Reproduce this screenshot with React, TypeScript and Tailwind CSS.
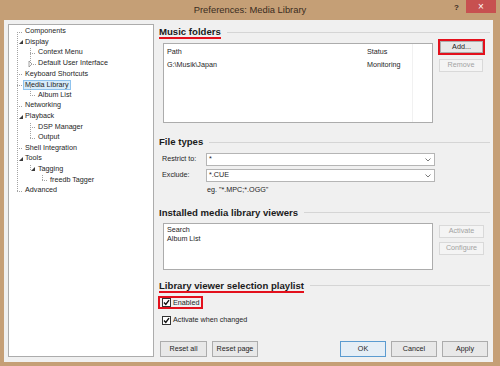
const tree = [
  { label: "Components", level: 1 },
  { label: "Display", level: 1 },
  { label: "Context Menu", level: 2 },
  { label: "Default User Interface", level: 2 },
  { label: "Keyboard Shortcuts", level: 1 },
  { label: "Media Library", level: 1, selected: true },
  { label: "Album List", level: 2 },
  { label: "Networking", level: 1 },
  { label: "Playback", level: 1 },
  { label: "DSP Manager", level: 2 },
  { label: "Output", level: 2 },
  { label: "Shell Integration", level: 1 },
  { label: "Tools", level: 1 },
  { label: "Tagging", level: 2 },
  { label: "freedb Tagger", level: 3 },
  { label: "Advanced", level: 1 },
];

const pad: Record<number, string> = { 1: "pl-[16px]", 2: "pl-[29px]", 3: "pl-[41px]" };

// row centre in tree box coordinates
const cy = (i: number) => 7.7 + 10.6 * i;

function TreeLines() {
  const dot = { stroke: "#a3a3a3", strokeWidth: 1, strokeDasharray: "1 1" };
  const h = (x1: number, x2: number, i: number) => (
    <line key={`h${x1}-${i}`} x1={x1} x2={x2} y1={Math.round(cy(i)) + 0.5} y2={Math.round(cy(i)) + 0.5} {...dot} />
  );
  const v = (x: number, a: number, b: number) => (
    <line key={`v${x}-${a}`} x1={x + 0.5} x2={x + 0.5} y1={Math.round(cy(a))} y2={Math.round(cy(b)) + 1} {...dot} />
  );
  const open = (x: number, i: number) => {
    const y = Math.round(cy(i));
    return <polygon key={`o${i}`} points={`${x + 4},${y - 2} ${x + 4},${y + 2} ${x},${y + 2}`} fill="#3a3a3a" />;
  };
  return (
    <svg className="absolute -left-px -top-px" width="146" height="200">
      {v(9, 0, 15)}
      {[0, 4, 5, 7, 11, 15].map((i) => h(9, 15, i))}
      {open(11, 1)}
      {open(11, 8)}
      {open(11, 12)}
      {v(22, 1, 3)}
      {v(22, 5, 6)}
      {v(22, 8, 10)}
      {v(22, 12, 13)}
      {[2, 6, 9, 10].map((i) => h(22, 28, i))}
      <polygon points={`21,${Math.round(cy(3)) - 3} 24,${Math.round(cy(3))} 21,${Math.round(cy(3)) + 3}`} fill="white" stroke="#8a8a8a" strokeWidth="0.8" />
      <line x1="25" x2="28" y1={Math.round(cy(3)) + 0.5} y2={Math.round(cy(3)) + 0.5} {...dot} />
      {open(23, 13)}
      {v(34, 13, 14)}
      {h(34, 40, 14)}
    </svg>
  );
}

function Heading({ label, red }: { label: string; red?: boolean }) {
  return (
    <div className="flex h-[12px] items-center">
      <span className="relative text-[9.6px] font-bold leading-[12px] text-[#1b1b1b]">
        {label}
        {red && <span className="absolute -bottom-px left-0 right-0 h-[2px] bg-[#e3101c]" />}
      </span>
      <div className="ml-[6px] h-px flex-1 bg-[#d5d5d5]" />
    </div>
  );
}

function Button({ label, disabled, def, w = "w-[46px]", h = "h-[16px]" }: { label: string; disabled?: boolean; def?: boolean; w?: string; h?: string }) {
  return (
    <div
      className={`${w} ${h} flex items-center justify-center border text-[7.2px] ${
        disabled
          ? "border-[#d9d9d9] bg-[#f4f4f4] text-[#a3a3a3]"
          : def
          ? "border-[#5b9bd0] bg-[#e5eef6] text-[#1e1e1e]"
          : "border-[#acacac] bg-[#e8e8e8] text-[#1e1e1e]"
      }`}
    >
      {label}
    </div>
  );
}

function Combo({ label, value }: { label: string; value: string }) {
  return (
    <div className="flex items-center">
      <span className="w-[47px] pl-[3px] text-[7.2px] text-[#1e1e1e]">{label}</span>
      <div className="flex h-[13px] w-[229px] items-center justify-between border border-[#b5b5b5] bg-white pl-[2px] pr-[3px] text-[7.2px] text-[#1e1e1e]">
        <span>{value}</span>
        <svg width="6" height="4" viewBox="0 0 6 4">
          <polyline points="0.5,0.5 3,3 5.5,0.5" fill="none" stroke="#7a7a7a" strokeWidth="1" />
        </svg>
      </div>
    </div>
  );
}

function Check() {
  return (
    <span className="flex h-[9px] w-[9px] shrink-0 items-center justify-center border border-[#333] bg-white">
      <svg width="7" height="7" viewBox="0 0 7 7">
        <polyline points="1,3.6 2.8,5.5 6,1.2" fill="none" stroke="#111" strokeWidth="1.4" />
      </svg>
    </span>
  );
}

export default function App() {
  return (
    <div className="h-[366px] w-[500px] overflow-hidden bg-[#c59f76] font-['Liberation_Sans',Arial,sans-serif]">
      <div className="relative flex h-[20px] items-center justify-center">
        <span className="text-[9.4px] text-[#3a2c1e]">Preferences: Media Library</span>
        <span className="absolute left-[454px] top-[2px] text-[8px] font-bold text-[#3a2c1e]">?</span>
        <div className="absolute left-[466px] top-0 flex h-[13px] w-[30px] items-center justify-center bg-[#c75050] text-[10px] leading-none text-white">
          ×
        </div>
      </div>

      <div className="ml-[4px] flex h-[342px] w-[489px] bg-[#f0f0f0]">
        <div className="relative ml-[4px] mt-[4px] h-[333px] w-[146px] border border-[#acacac] bg-white pt-[1.4px]">
          <TreeLines />
          {tree.map((t) => (
            <div key={t.label} className={`flex h-[10.6px] items-center ${pad[t.level]} text-[7.2px] text-[#1e1e1e]`}>
              {t.selected ? (
                <span className="-ml-[2px] border border-[#8fc3ee] bg-[#d7ebfa] px-[1px] leading-[8px]">{t.label}</span>
              ) : (
                <span className="relative bg-white">{t.label}</span>
              )}
            </div>
          ))}
        </div>

        <div className="ml-[5px] flex w-[331px] flex-col pt-[6px]">
          <Heading label="Music folders" red />
          <div className="mt-[5px] flex">
            <div className="relative ml-[4px] h-[80px] w-[270px] border border-[#acacac] bg-white px-[3px] pt-[3px] text-[7.2px] leading-[10px] text-[#1e1e1e]">
              <div className="absolute bottom-0 left-[248px] top-0 w-px bg-[#f1f1f1]" />
              <div className="flex">
                <span className="w-[200px]">Path</span>
                <span>Status</span>
              </div>
              <div className="mt-[3px] flex">
                <span className="w-[200px]">G:\Musik\Japan</span>
                <span>Monitoring</span>
              </div>
            </div>
            <div className="ml-[5px] flex flex-col">
              <div className="mt-[-4px] border-2 border-[#e3101c]">
                <Button label="Add..." w="w-[43px]" h="h-[12px]" />
              </div>
              <div className="ml-[1px] mt-[4px]">
                <Button label="Remove" disabled w="w-[44px]" h="h-[13px]" />
              </div>
            </div>
          </div>

          <div className="mt-[13px]">
            <Heading label="File types" />
          </div>
          <div className="mt-[5px]">
            <Combo label="Restrict to:" value="*" />
          </div>
          <div className="mt-[3px]">
            <Combo label="Exclude:" value="*.CUE" />
          </div>
          <div className="mt-[3px] pl-[48px] text-[7.2px] leading-[9px] text-[#1e1e1e]">eg. "*.MPC;*.OGG"</div>

          <div className="mt-[12.5px]">
            <Heading label="Installed media library viewers" />
          </div>
          <div className="mt-[4px] flex">
            <div className="ml-[4px] h-[47px] w-[270px] border border-[#acacac] bg-white px-[3px] pt-[1px] text-[7.2px] leading-[9px] text-[#1e1e1e]">
              <div>Search</div>
              <div>Album List</div>
            </div>
            <div className="ml-[6px] flex flex-col">
              <div className="mt-[2px]">
                <Button label="Activate" disabled w="w-[45px]" h="h-[13px]" />
              </div>
              <div className="mt-[4px]">
                <Button label="Configure" disabled w="w-[45px]" h="h-[13px]" />
              </div>
            </div>
          </div>

          <div className="mt-[10px]">
            <Heading label="Library viewer selection playlist" red />
          </div>
          <div className="-ml-[1px] mt-[4.5px] flex h-[13px] w-[45px] items-center border-2 border-[#e3101c] pl-[2px]">
            <Check />
            <span className="ml-[2px] text-[7.2px] leading-[8px] text-[#1e1e1e]">Enabled</span>
          </div>
          <div className="mt-[6px] flex items-center pl-[3px]">
            <Check />
            <span className="ml-[2px] text-[7.2px] text-[#1e1e1e]">Activate when changed</span>
          </div>

          <div className="mt-[15.5px] flex pr-[2px]">
            <div className="ml-[1px]">
              <Button label="Reset all" w="w-[47px]" />
            </div>
            <div className="ml-[5px]">
              <Button label="Reset page" />
            </div>
            <div className="flex-1" />
            <Button label="OK" def />
            <div className="ml-[5px]">
              <Button label="Cancel" />
            </div>
            <div className="ml-[5px]">
              <Button label="Apply" />
            </div>
          </div>
        </div>
      </div>
    </div>
  );
}
